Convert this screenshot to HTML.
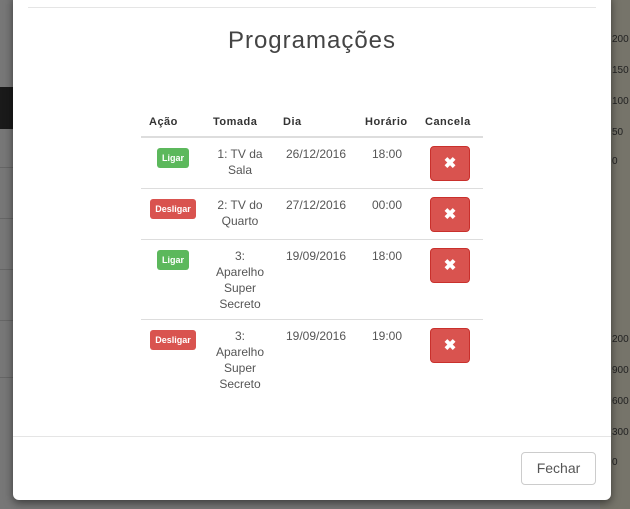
<!DOCTYPE html><html><head><style>
body{margin:0;width:630px;height:509px;overflow:hidden;background:#777;font-family:"Liberation Sans",sans-serif;position:relative}
.rbg{position:absolute;left:600px;top:0;width:30px;height:509px;background:#76746a}
.dark{position:absolute;left:0;top:87px;width:20px;height:42px;background:#1a1a1a}
.hl{position:absolute;left:0;width:20px;height:1px;background:#666}
.ax{position:absolute;left:612px;font-size:10px;color:#222}
.modal{position:absolute;left:13px;top:-6px;width:598px;height:506px;background:#fff;border-radius:6px;box-shadow:0 3px 9px rgba(0,0,0,.5)}
.topline{position:absolute;left:15px;top:13px;width:568px;height:1px;background:#e5e5e5}
h1{position:absolute;top:33px;left:0;width:598px;text-align:center;font-weight:300;font-size:24px;color:#444;margin:0;letter-spacing:1px}
table{position:absolute;left:128px;top:114px;width:342px;border-collapse:collapse;font-size:12px;color:#555}
th{font-size:11px;color:#333;text-align:left;padding:4px 8px;height:20px;border-bottom:2px solid #ddd;letter-spacing:.5px}
td{vertical-align:top;padding:8px 4px 7px;border-top:1px solid #ddd;text-align:center;line-height:16px}
.lbl{display:inline-block;color:#fff;font-size:9px;font-weight:bold;padding:2px 5px;border-radius:3px;margin-top:2px}
.g{background:#5cb85c}.r{background:#d9534f}
.x{display:inline-block;width:38px;height:33px;background:#d9534f;border:1px solid #c9302c;border-radius:4px;color:#fff;font-weight:bold;font-size:15px;line-height:33px;margin-top:0}
.foot{position:absolute;left:0;top:442px;width:598px;height:1px;background:#e5e5e5}
.btn{position:absolute;left:508px;top:458px;width:73px;height:31px;border:1px solid #ccc;border-radius:4px;text-align:center;line-height:31px;font-size:14px;color:#555}
</style></head><body>
<div class="rbg"></div><div class="dark"></div>
<div class="hl" style="top:167px"></div><div class="hl" style="top:218px"></div><div class="hl" style="top:269px"></div><div class="hl" style="top:320px"></div><div class="hl" style="top:377px"></div>
<div class="ax" style="top:34px">200</div><div class="ax" style="top:65px">150</div><div class="ax" style="top:96px">100</div><div class="ax" style="top:127px">50</div><div class="ax" style="top:156px">0</div>
<div class="ax" style="top:334px">200</div><div class="ax" style="top:365px">900</div><div class="ax" style="top:396px">600</div><div class="ax" style="top:427px">300</div><div class="ax" style="top:457px">0</div>
<div class="modal">
<div class="topline"></div>
<h1>Programações</h1>
<table>
<tr><th style="width:48px">Ação</th><th style="width:54px">Tomada</th><th style="width:66px">Dia</th><th style="width:44px">Horário</th><th>Cancela</th></tr>
<tr><td><span class="lbl g">Ligar</span></td><td>1: TV da<br>Sala</td><td>26/12/2016</td><td>18:00</td><td><span class="x">✖</span></td></tr>
<tr><td><span class="lbl r">Desligar</span></td><td>2: TV do<br>Quarto</td><td>27/12/2016</td><td>00:00</td><td><span class="x">✖</span></td></tr>
<tr><td><span class="lbl g">Ligar</span></td><td>3:<br>Aparelho<br>Super<br>Secreto</td><td>19/09/2016</td><td>18:00</td><td><span class="x">✖</span></td></tr>
<tr><td><span class="lbl r">Desligar</span></td><td>3:<br>Aparelho<br>Super<br>Secreto</td><td>19/09/2016</td><td>19:00</td><td><span class="x">✖</span></td></tr>
</table>
<div class="foot"></div>
<div class="btn">Fechar</div>
</div>
</body></html>
